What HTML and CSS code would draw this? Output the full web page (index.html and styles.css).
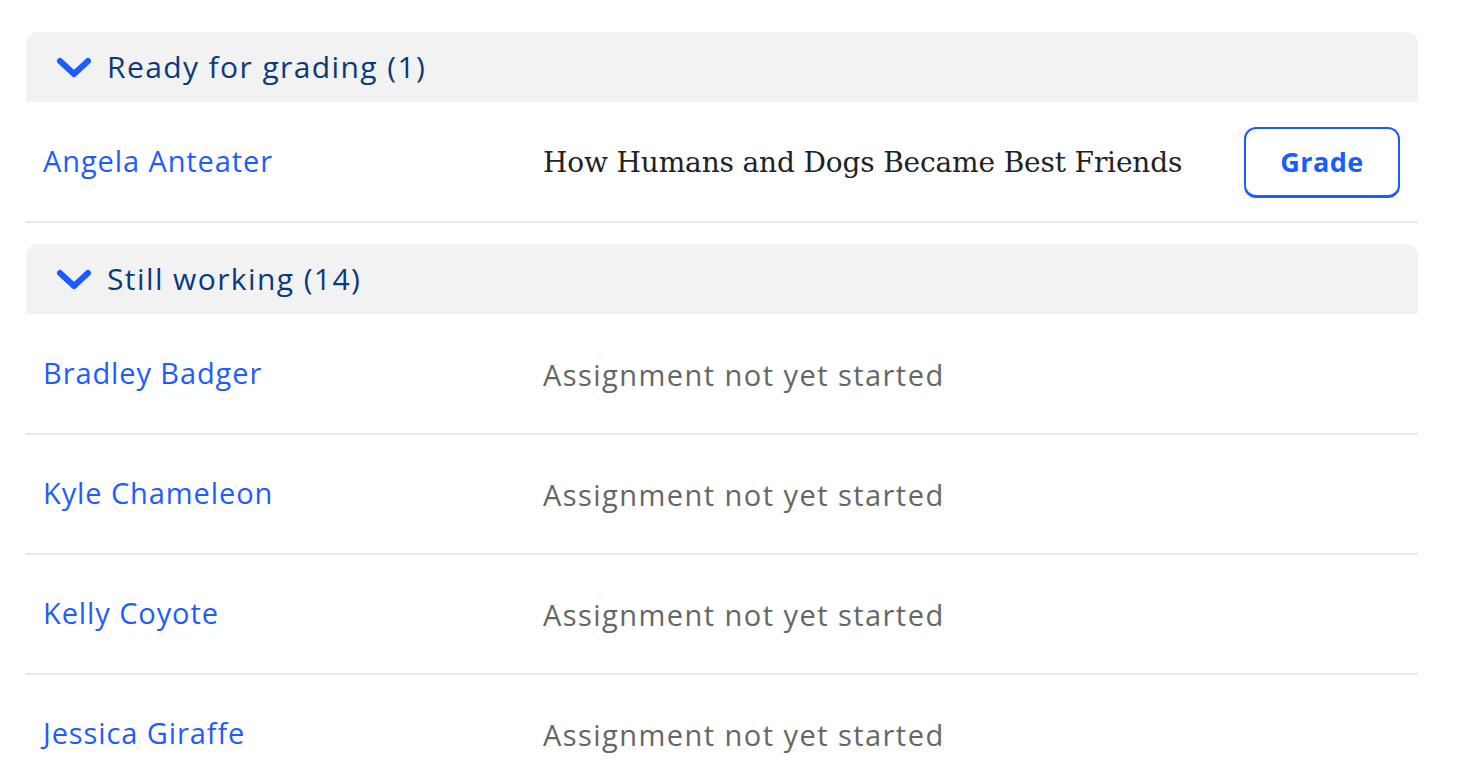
FILE: index.html
```html
<!DOCTYPE html>
<html>
<head>
<meta charset="utf-8">
<link rel="stylesheet" href="styles.css">
</head>
<body>
<div class="page">
  <section class="group">
    <div class="group-head">
      <svg class="chev" width="36" height="22" viewBox="0 0 36 22"><path d="M4 4 L18 17 L32 4" fill="none" stroke="#1a5cff" stroke-width="6" stroke-linecap="round" stroke-linejoin="round"/></svg>
      <span class="group-title">Ready for grading (1)</span>
    </div>
    <div class="row">
      <a class="name">Angela Anteater</a>
      <span class="title">How Humans and Dogs Became Best Friends</span>
      <button class="grade">Grade</button>
    </div>
  </section>
  <section class="group">
    <div class="group-head">
      <svg class="chev" width="36" height="22" viewBox="0 0 36 22"><path d="M4 4 L18 17 L32 4" fill="none" stroke="#1a5cff" stroke-width="6" stroke-linecap="round" stroke-linejoin="round"/></svg>
      <span class="group-title">Still working (14)</span>
    </div>
    <div class="row">
      <a class="name">Bradley Badger</a>
      <span class="status">Assignment not yet started</span>
    </div>
    <div class="row">
      <a class="name">Kyle Chameleon</a>
      <span class="status">Assignment not yet started</span>
    </div>
    <div class="row">
      <a class="name">Kelly Coyote</a>
      <span class="status">Assignment not yet started</span>
    </div>
    <div class="row">
      <a class="name">Jessica Giraffe</a>
      <span class="status">Assignment not yet started</span>
    </div>
  </section>
</div>
</body>
</html>
```

FILE: styles.css
```css
html, body {
  margin: 0;
  padding: 0;
  background: #fff;
  overflow: hidden;
}
.page {
  width: 1392px;
  margin-left: 26px;
  padding-top: 32px;
  display: flex;
  flex-direction: column;
  gap: 21px;
  font-family: "Open Sans", Lato, sans-serif;
}
.group {
  display: flex;
  flex-direction: column;
}
.group-head {
  height: 70px;
  background: #f2f2f2;
  border-radius: 12px 12px 0 0;
  display: flex;
  align-items: center;
  padding-left: 30px;
  gap: 15px;
  box-sizing: border-box;
}
.chev {
  display: block;
  margin-top: 1px;
}
.group-title {
  font-size: 30px;
  letter-spacing: 1.4px;
  color: #0a3a7e;
  margin-top: -2px;
}
.row {
  height: 121px;
  box-sizing: border-box;
  padding: 1px 18px 0 17px;
  border-bottom: 2px solid #e6e6e6;
  display: flex;
  align-items: center;
}
.group-head + .row {
  height: 121px;
}
.row + .row {
  height: 120px;
  padding-top: 0;
}
.name {
  width: 500px;
  font-size: 29px;
  letter-spacing: 0.9px;
  color: #1f5cff;
  margin-top: -3px;
}
.status {
  font-size: 29px;
  letter-spacing: 1.45px;
  color: #666;
}
.title {
  flex: 1;
  font-family: "DejaVu Serif", Georgia, serif;
  font-size: 28px;
  color: #222;
  letter-spacing: -0.15px;
}
.grade {
  width: 156px;
  height: 71px;
  border: 2px solid #1a5cff;
  border-bottom-width: 3px;
  border-radius: 12px;
  background: #fff;
  color: #1a5cff;
  font-family: "Open Sans", sans-serif;
  font-weight: 700;
  font-size: 27px;
  letter-spacing: 0.5px;
  cursor: pointer;
}
```
